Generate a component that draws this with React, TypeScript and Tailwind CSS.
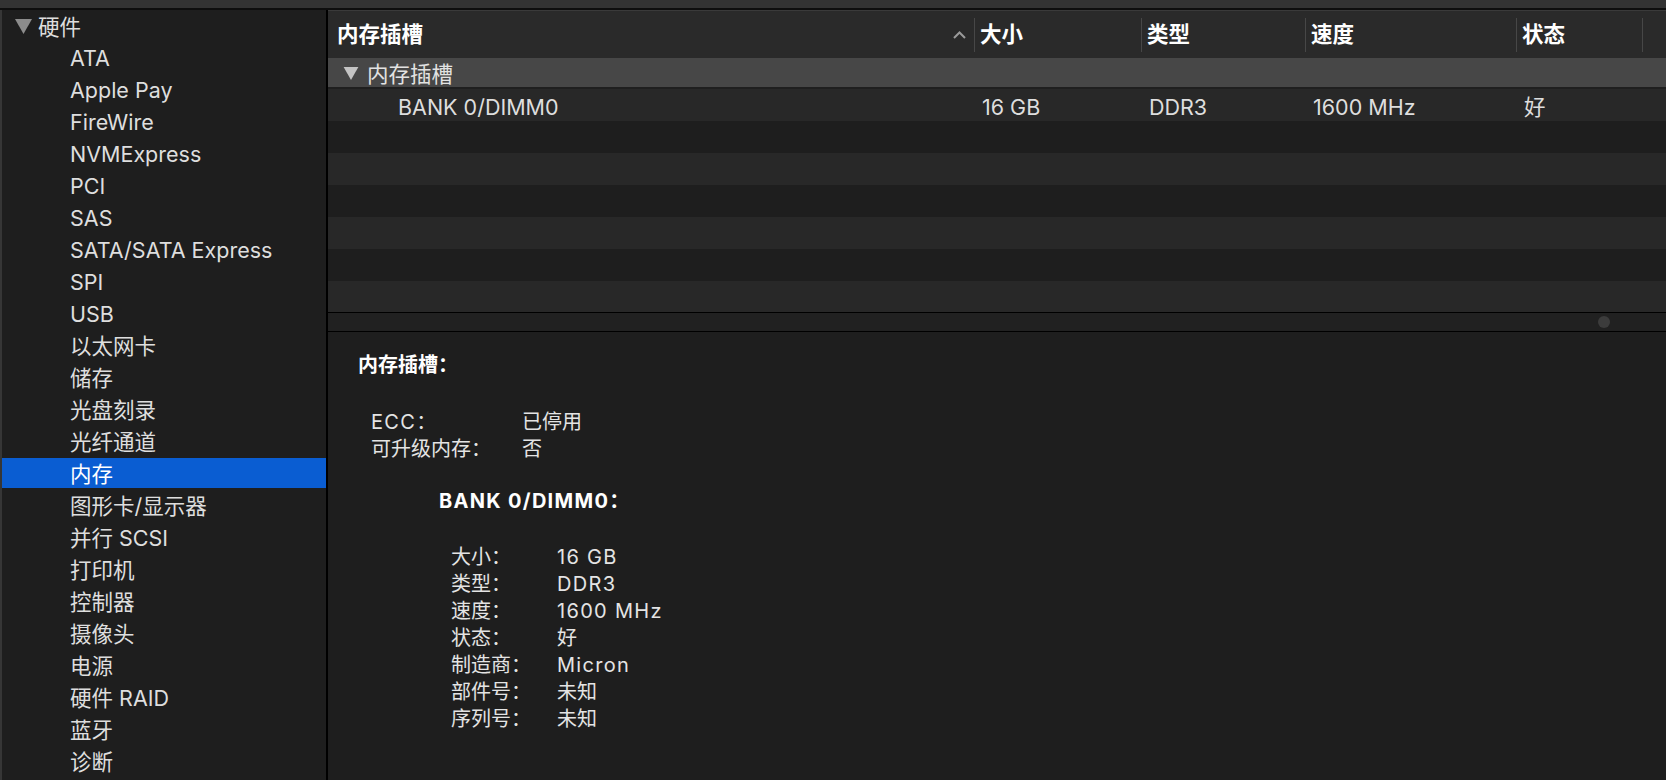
const sidebarItems = [
  "ATA",
  "Apple Pay",
  "FireWire",
  "NVMExpress",
  "PCI",
  "SAS",
  "SATA/SATA Express",
  "SPI",
  "USB",
  "以太网卡",
  "储存",
  "光盘刻录",
  "光纤通道",
  "内存",
  "图形卡/显示器",
  "并行 SCSI",
  "打印机",
  "控制器",
  "摄像头",
  "电源",
  "硬件 RAID",
  "蓝牙",
  "诊断",
];

const columns = [
  { label: "大小", width: "w-[167px]" },
  { label: "类型", width: "w-[164px]" },
  { label: "速度", width: "w-[211px]" },
  { label: "状态", width: "w-[126px]" },
];

const slotDetails = [
  ["大小：", "16 GB"],
  ["类型：", "DDR3"],
  ["速度：", "1600 MHz"],
  ["状态：", "好"],
  ["制造商：", "Micron"],
  ["部件号：", "未知"],
  ["序列号：", "未知"],
];

// latin text in the detail pane runs wider than the cjk glyphs
const latin = (text: string) =>
  /[A-Za-z0-9]/.test(text) ? "tracking-[1.3px]" : "";

const Triangle = ({ className }: { className: string }) => (
  <svg viewBox="0 0 17 15" className={className}>
    <polygon points="0,0 17,0 8.5,15" fill="currentColor" />
  </svg>
);

const Sidebar = () => (
  <div className="w-[326px] shrink-0 bg-[#1e1e1e] border-l-2 border-[#363636] h-full overflow-hidden">
    <div className="h-[32px] flex items-center pl-[13px]">
      <Triangle className="w-[17px] h-[15px] text-[#8c8c8c]" />
      <span className="ml-[6px] pt-[3px] text-[#dedede]">硬件</span>
    </div>
    {sidebarItems.map((item) => {
      const selected = item === "内存";
      return (
        <div
          key={item}
          className={`h-[30px] mb-[2px] flex items-center pl-[68px] pt-[4px] ${
            selected ? "bg-[#0a5dd2] text-white" : "text-[#dedede]"
          }`}
        >
          {item}
        </div>
      );
    })}
  </div>
);

const TableHeader = () => (
  <div className="h-[48px] shrink-0 flex bg-[#2a2a2a] border-t border-[#3a3a3a]">
    <div className="w-[646px] flex items-center pl-[9px] pr-[8px]">
      <span className="font-bold text-white">内存插槽</span>
      <svg viewBox="0 0 13 8" className="ml-auto w-[13px] h-[8px]">
        <polyline
          points="1,7 6.5,1.5 12,7"
          fill="none"
          stroke="#9a9a9a"
          strokeWidth="2"
        />
      </svg>
    </div>
    {columns.map((col) => (
      <div key={col.label} className={`${col.width} flex items-center`}>
        <div className="w-px h-[34px] bg-[#474747]" />
        <span className="ml-[5px] font-bold text-white">{col.label}</span>
      </div>
    ))}
    <div className="flex items-center">
      <div className="w-px h-[34px] bg-[#474747]" />
    </div>
  </div>
);

const TableBody = () => {
  const stripes = [1, 2, 3, 4, 5, 6];
  return (
    <div className="h-[254px] shrink-0 overflow-hidden">
      <div className="h-[31px] flex items-center bg-[#474747] border-b-2 border-[#1f1f1f] pl-[15px] pt-[4px]">
        <Triangle className="w-[16px] h-[13px] text-[#c4c4c4] -mt-[2px]" />
        <span className="ml-[8px] text-[#e2e2e2]">内存插槽</span>
      </div>
      <div className="h-[32px] flex items-center bg-[#282828] text-[#dedede] pt-[6px]">
        <div className="w-[646px] pl-[70px]">BANK 0/DIMM0</div>
        <div className="w-[167px] pl-[8px]">16 GB</div>
        <div className="w-[164px] pl-[8px]">DDR3</div>
        <div className="w-[211px] pl-[8px]">1600 MHz</div>
        <div className="w-[126px] pl-[8px]">好</div>
      </div>
      {stripes.map((n) => (
        <div
          key={n}
          className={`h-[32px] ${n % 2 === 1 ? "bg-[#1e1e1e]" : "bg-[#282828]"}`}
        />
      ))}
    </div>
  );
};

const Details = () => (
  <div className="flex-1 bg-[#1e1e1e] text-[20px] leading-[27px] text-[#e4e4e4] pt-[20px] pl-[30px]">
    <div className="font-bold text-white">内存插槽：</div>
    <div className="mt-[30px] pl-[13px]">
      <div className="flex">
        <span className={`w-[151px] ${latin("ECC")}`}>ECC：</span>
        <span>已停用</span>
      </div>
      <div className="flex">
        <span className="w-[151px]">可升级内存：</span>
        <span>否</span>
      </div>
    </div>
    <div className="mt-[25px] pl-[81px]">
      <div className={`font-bold text-white ${latin("BANK")}`}>BANK 0/DIMM0：</div>
      <div className="mt-[29px] pl-[12px]">
        {slotDetails.map(([label, value]) => (
          <div key={label} className="flex">
            <span className="w-[106px]">{label}</span>
            <span className={latin(value)}>{value}</span>
          </div>
        ))}
      </div>
    </div>
  </div>
);

export default function App() {
  return (
    <div className="w-[1666px] h-[780px] flex flex-col bg-[#1e1e1e] overflow-hidden font-['Inter','Noto_Sans_CJK_SC',sans-serif] text-[21.5px] leading-none">
      <div className="h-[8px] shrink-0 bg-[#333333] border-b-2 border-[#0e0e0e] box-content" />
      <div className="flex flex-1 min-h-0">
        <Sidebar />
        <div className="w-[2px] shrink-0 bg-black" />
        <div className="flex-1 flex flex-col min-w-0">
          <TableHeader />
          <TableBody />
          <div className="h-[18px] shrink-0 bg-[#212121] border-y border-black box-content flex items-center justify-end pr-[56px]">
            <div className="w-[12px] h-[12px] rounded-full bg-[#3c3c3c]" />
          </div>
          <Details />
        </div>
      </div>
    </div>
  );
}
